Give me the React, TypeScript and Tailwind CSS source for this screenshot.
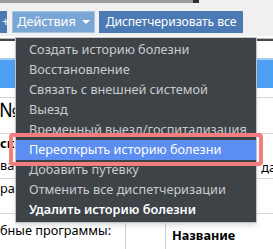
import React from "react";

const items = [
  "Создать историю болезни",
  "Восстановление",
  "Связать с внешней системой",
  "Выезд",
  "Временный выезд/госпитализация",
  "Переоткрыть историю болезни",
  "Добавить путевку",
  "Отменить все диспетчеризации",
];

function ActionsMenu() {
  return (
    <div className="absolute left-[15px] top-[37px] w-[242px] border border-[#c4c4c4] bg-[#3e4348] py-[2px] shadow-md">
      {items.map((t, i) => (
        <div
          key={t}
          className={
            i === 5
              ? "flex h-[20px] items-center bg-[#5b8ef0] pl-[13px] text-white"
              : "flex h-[20px] items-center pl-[13px] text-[#c9cbcd]"
          }
        >
          {t}
        </div>
      ))}
      <div className="flex h-[20px] items-center pl-[13px] font-semibold text-white">
        Удалить историю болезни
      </div>
    </div>
  );
}

function App() {
  return (
    <div
      className="relative h-[249px] w-[273px] overflow-hidden bg-white text-[12.7px] text-black"
      style={{ fontFamily: '"Noto Sans", "Open Sans", sans-serif' }}
    >
      {/* top strip */}
      <div className="flex h-[3px]">
        <div className="w-[193px] bg-[#9b9b9b]" />
        <div className="w-[6px] bg-[#2f2f2f]" />
        <div className="flex-1 bg-[#f0f0f0]" />
      </div>

      {/* toolbar */}
      <div className="flex h-[33px] items-start gap-[4px] bg-[#f0f0f0] pt-[8px]">
        <div className="flex h-[22px] w-[7px] items-center justify-end bg-[#4a79b3] text-white">
          <span className="-mr-[2px] text-[12px]">+</span>
        </div>
        <div className="ml-[1px] flex h-[22px] w-[83px] items-center justify-center gap-[6px] border border-[#a6c5e6] bg-[#7aa6d6] text-white">
          <span>Действия</span>
          <span className="h-0 w-0 border-x-[4px] border-t-[4px] border-x-transparent border-t-white" />
        </div>
        <div className="flex h-[22px] w-[144px] items-center justify-center bg-[#4a79b3] text-[12.2px] tracking-[-0.1px] text-white">
          Диспетчеризовать все
        </div>
      </div>

      {/* page behind the menu */}
      <div className="h-[2px] bg-white" />
      <div className="h-[3px] border-t border-[#bdbdbd] bg-[#44484c]" />
      <div className="h-[17px] bg-white" />
      <div className="h-[30px] border-t-2 border-[#a8cdf5] bg-[#4ea1f5]" />
      <div className="h-[10px] border-b border-[#d8d8d8] bg-white" />
      <div className="flex h-[24px] items-center">
        <span className="-ml-[1px] text-[20px] leading-none">№</span>
      </div>
      <div className="h-[12px] border-b border-[#d8d8d8]" />
      <div className="flex h-[20px] items-center">
        <span className="font-bold">ск</span>
      </div>
      <div className="flex h-[24px] items-center justify-between">
        <span>вак</span>
        <span className="-mr-[3px] pt-[4px]">да</span>
      </div>
      <div className="flex h-[20px] items-center justify-between border-t border-[#d8d8d8]">
        <span>рам</span>
      </div>
      <div className="h-[16px] border-b border-[#d8d8d8]" />
      <div className="flex h-[36px]">
        <div className="w-[125px] pt-[7px]">бные программы:</div>
        <div className="w-[41px] border-x border-[#d0d0e0]" />
        <div className="flex-1 pl-[6px] pt-[12px] font-bold">Название</div>
      </div>

      <ActionsMenu />

      {/* annotation highlight */}
      <div className="absolute left-[9px] top-[133px] h-[33px] w-[254px] rounded-[4px] border-[4px] border-[#f27f80]" />
    </div>
  );
}

export default App;
